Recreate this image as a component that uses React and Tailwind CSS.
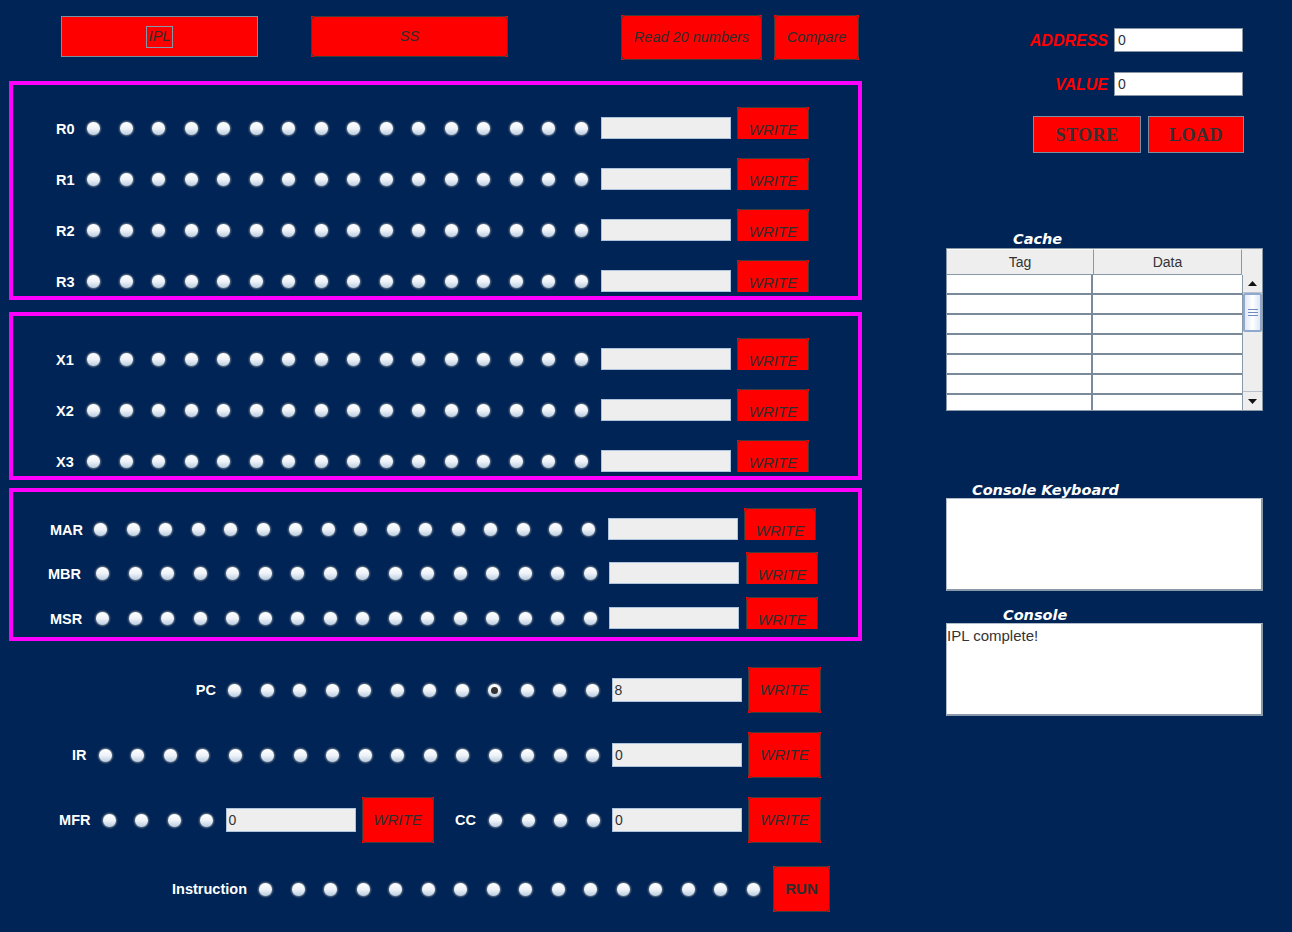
import React from "react";

const BG = "bg-[#002456]";

function Radio({ on }) {
  return (
    <span className="flex h-[15px] w-[15px] shrink-0 items-center justify-center rounded-full border border-[#56687d] bg-linear-to-b from-white via-[#eef3f9] to-[#b9cbe0] shadow-[0_0_0_1px_rgba(90,105,125,0.35)]">
      {on && <span className="h-[7px] w-[7px] rounded-full bg-[#333333]" />}
    </span>
  );
}

function Radios({ count, selected = -1 }) {
  return (
    <div className="flex shrink-0 items-center gap-[17.5px]">
      {Array.from({ length: count }).map((_, i) => (
        <Radio key={i} on={i === selected} />
      ))}
    </div>
  );
}

function Field({ value = "", className = "" }) {
  return (
    <div className={`flex shrink-0 items-center border border-[#adc4dc] bg-[#eeeeee] pl-[2px] text-[14px] text-[#333333] ${className}`}>
      {value}
    </div>
  );
}

function RedBtn({ className = "", children }) {
  return (
    <div className={`shrink-0 bg-[#ff0000] ${className}`}>
      <div className="flex h-full w-full items-center justify-center rounded-[4px] border border-[#3c3c3c]">
        {children}
      </div>
    </div>
  );
}

function ClippedWrite({ className = "" }) {
  return (
    <div className={`h-[32px] shrink-0 overflow-hidden bg-[#ff0000] ${className}`}>
      <div className="flex h-[46px] items-center justify-center rounded-[4px] border border-[#3c3c3c] text-[15px] italic text-[#2e2e2e]">
        WRITE
      </div>
    </div>
  );
}

function BoxRow({ label, pl, labelW, fieldMl = "ml-[12.5px]", btnMl = "ml-[6px]" }) {
  return (
    <div className="flex h-[32px] items-end" style={{ paddingLeft: pl }}>
      <div className="flex h-[22px] shrink-0 items-center pt-[3px] text-[14.5px] font-bold text-white" style={{ width: labelW }}>
        {label}
      </div>
      <div className="flex h-[22px] items-center">
        <Radios count={16} />
      </div>
      <Field className={`h-[22px] w-[130px] ${fieldMl}`} />
      <ClippedWrite className={`w-[72px] ${btnMl}`} />
    </div>
  );
}

function Label({ children, w, pr = "pr-[11px]" }) {
  return (
    <div className={`flex shrink-0 justify-end pt-[2px] text-[14.5px] font-bold text-white ${pr}`} style={{ width: w }}>
      {children}
    </div>
  );
}

function BigWrite({ className = "" }) {
  return (
    <RedBtn className={`h-[46px] ${className}`}>
      <span className="text-[15px] italic text-[#2e2e2e]">WRITE</span>
    </RedBtn>
  );
}

function Arrow({ down }) {
  return (
    <svg width="9" height="5" viewBox="0 0 9 5">
      <polygon points={down ? "0,0 9,0 4.5,5" : "4.5,0 9,5 0,5"} fill="#111" />
    </svg>
  );
}

function CacheTable() {
  return (
    <div className="flex h-[163px] w-[317px] flex-col overflow-hidden border border-[#8a99a8] bg-white">
      <div className="flex h-[26px] shrink-0 bg-[#eeeeee] text-[14px] text-[#333333]">
        <div className="flex w-[147px] items-center justify-center border-r border-b border-[#8a99a8] border-t border-t-white">Tag</div>
        <div className="flex w-[148px] items-center justify-center border-r border-b border-[#8a99a8] border-t border-t-white">Data</div>
        <div className="flex-1" />
      </div>
      <div className="flex flex-1 overflow-hidden">
        <div className="flex w-[295px] flex-col overflow-hidden">
          {Array.from({ length: 7 }).map((_, i) => (
            <div key={i} className="flex h-[20px] shrink-0 border-b-2 border-[#7a8a99]">
              <div className="w-[146px] border-r-2 border-[#7a8a99]" />
              <div className="flex-1" />
            </div>
          ))}
        </div>
        <div className="flex w-[20px] flex-col border-l border-[#8a99a8] bg-[#eeeeee]">
          <div className="flex h-[18px] items-center justify-center border-b border-[#b8c2cc]">
            <Arrow />
          </div>
          <div className="flex h-[39px] flex-col items-center justify-center gap-[2px] rounded-[2px] border-2 border-[#8fa8cf] bg-linear-to-r from-[#dfe8f5] via-white to-[#dfe8f5]">
            <span className="h-px w-[10px] bg-[#6f8bbf]" />
            <span className="h-px w-[10px] bg-[#6f8bbf]" />
            <span className="h-px w-[10px] bg-[#6f8bbf]" />
          </div>
          <div className="flex-1" />
          <div className="flex h-[19px] items-center justify-center border-t border-[#b8c2cc]">
            <Arrow down />
          </div>
        </div>
      </div>
    </div>
  );
}

export default function App() {
  return (
    <div className={`flex h-[932px] w-[1292px] overflow-hidden ${BG} font-['Liberation_Sans',sans-serif]`}>
      {/* left side */}
      <div className="flex w-[870px] shrink-0 flex-col">
        <div className="mt-[15px] flex h-[45px] items-start">
          <div className="ml-[61px] mt-[1px] flex h-[41px] w-[197px] items-center justify-center border border-[#7d8ea0] bg-[#ff0000]">
            <span className="flex h-[22px] items-center border border-[#8797aa] px-[2px] text-[14.5px] italic text-[#2e2e2e]">IPL</span>
          </div>
          <RedBtn className="ml-[53px] mt-[1px] h-[41px] w-[197px]">
            <span className="text-[14.5px] italic text-[#2e2e2e]">SS</span>
          </RedBtn>
          <RedBtn className="ml-[113px] h-[45px] w-[141px]">
            <span className="text-[14.5px] italic text-[#2e2e2e]">Read 20 numbers</span>
          </RedBtn>
          <RedBtn className="ml-[12px] h-[45px] w-[85px]">
            <span className="text-[14.5px] italic text-[#2e2e2e]">Compare</span>
          </RedBtn>
        </div>

        <div className="ml-[9px] mt-[21px] flex h-[219px] w-[853px] flex-col gap-[19px] border-4 border-[#ff00ff] pt-[22px]">
          {["R0", "R1", "R2", "R3"].map((r) => (
            <BoxRow key={r} label={r} pl="43px" labelW="30px" />
          ))}
        </div>

        <div className="ml-[9px] mt-[12px] flex h-[168px] w-[853px] flex-col gap-[19px] border-4 border-[#ff00ff] pt-[22px]">
          {["X1", "X2", "X3"].map((r) => (
            <BoxRow key={r} label={r} pl="43px" labelW="30px" />
          ))}
        </div>

        <div className="ml-[9px] mt-[8px] flex h-[153px] w-[853px] flex-col border-4 border-[#ff00ff] pt-[16px]">
          <BoxRow label="MAR" pl="37px" labelW="43px" />
          <div className="mt-[12px]">
            <BoxRow label="MBR" pl="35px" labelW="47px" fieldMl="ml-[11.5px]" btnMl="ml-[7px]" />
          </div>
          <div className="mt-[13px]">
            <BoxRow label="MSR" pl="37px" labelW="45px" fieldMl="ml-[11.5px]" btnMl="ml-[7px]" />
          </div>
        </div>

        <div className="mt-[26px] flex h-[46px] items-center">
          <Label w="227px">PC</Label>
          <Radios count={12} selected={8} />
          <Field value="8" className="ml-[12px] h-[24px] w-[130px]" />
          <BigWrite className="ml-[6px] w-[73px]" />
        </div>

        <div className="mt-[19px] flex h-[46px] items-center">
          <Label w="97.5px">IR</Label>
          <Radios count={16} />
          <Field value="0" className="ml-[12px] h-[24px] w-[130px]" />
          <BigWrite className="ml-[6px] w-[73px]" />
        </div>

        <div className="mt-[19px] flex h-[46px] items-center">
          <Label w="101.5px">MFR</Label>
          <Radios count={4} />
          <Field value="0" className="ml-[11.5px] h-[24px] w-[130px]" />
          <BigWrite className="ml-[6px] w-[72px]" />
          <Label w="54.5px" pr="pr-[12px]">CC</Label>
          <Radios count={4} />
          <Field value="0" className="ml-[11.5px] h-[24px] w-[130px]" />
          <BigWrite className="ml-[6px] w-[73px]" />
        </div>

        <div className="mt-[23px] flex h-[46px] items-center">
          <Label w="258px">Instruction</Label>
          <Radios count={16} />
          <RedBtn className="ml-[12.5px] h-[46px] w-[57px]">
            <span className="text-[15px] font-bold text-[#2e2e2e]">RUN</span>
          </RedBtn>
        </div>
      </div>

      {/* right side */}
      <div className="ml-[76px] flex w-[317px] shrink-0 flex-col">
        <div className="mt-[28px] flex h-[24px] items-center justify-end pr-[20px]">
          <span className="mr-[6px] pt-[2px] text-[16px] font-bold italic text-[#ff0000]">ADDRESS</span>
          <div className="flex h-[24px] w-[129px] items-center border border-[#8795a5] bg-white pl-[3px] text-[14px] text-[#333333]">0</div>
        </div>
        <div className="mt-[20px] flex h-[24px] items-center justify-end pr-[20px]">
          <span className="mr-[6px] pt-[2px] text-[16px] font-bold italic text-[#ff0000]">VALUE</span>
          <div className="flex h-[24px] w-[129px] items-center border border-[#8795a5] bg-white pl-[3px] text-[14px] text-[#333333]">0</div>
        </div>
        <div className="mt-[20px] flex h-[37px] pl-[87px]">
          <div className="flex w-[108px] items-center justify-center border border-[#7d8ea0] bg-[#ff0000] pt-[2px] font-['Liberation_Serif',serif] text-[18px] font-bold tracking-[0.5px] text-[#333333]">
            STORE
          </div>
          <div className="ml-[7px] flex w-[96px] items-center justify-center border border-[#7d8ea0] bg-[#ff0000] pt-[2px] font-['Liberation_Serif',serif] text-[18px] font-bold tracking-[0.5px] text-[#333333]">
            LOAD
          </div>
        </div>

        <div className="mt-[78px] h-[16px] pl-[67px] font-['DejaVu_Sans',sans-serif] text-[14.5px] leading-[16px] font-bold italic text-white">
          Cache
        </div>
        <div className="mt-[1px]">
          <CacheTable />
        </div>

        <div className="mt-[71px] h-[16px] pl-[26px] font-['DejaVu_Sans',sans-serif] text-[14.5px] leading-[16px] font-bold italic text-white">
          Console Keyboard
        </div>
        <div className="h-[93px] w-[317px] border border-[#b0bcc8] border-r-2 border-b-2 border-r-[#8a99a8] border-b-[#8a99a8] bg-white" />

        <div className="mt-[16px] h-[16px] pl-[57px] font-['DejaVu_Sans',sans-serif] text-[14.5px] leading-[16px] font-bold italic text-white">
          Console
        </div>
        <div className="h-[93px] w-[317px] border border-[#b0bcc8] border-r-2 border-b-2 border-r-[#8a99a8] border-b-[#8a99a8] bg-white pt-[3px] text-[15px] leading-[18px] text-[#333333]">
          IPL complete!
        </div>
      </div>
    </div>
  );
}
